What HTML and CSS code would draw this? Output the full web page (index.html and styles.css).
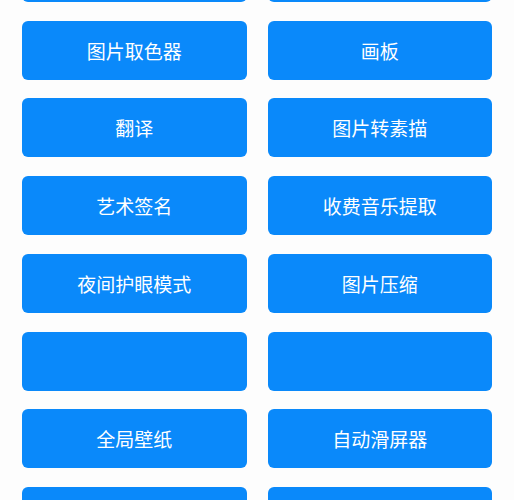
FILE: index.html
```html
<!DOCTYPE html>
<html lang="zh-CN">
<head>
    <meta charset="UTF-8">
    <meta name="viewport" content="width=device-width, initial-scale=1.0">
    <link rel="stylesheet" href="styles.css">
    <title>工具箱</title>
</head>
<body>
    <div class="tools">
        <button class="tool"></button>
        <button class="tool"></button>
        <button class="tool">图片取色器</button>
        <button class="tool">画板</button>
        <button class="tool">翻译</button>
        <button class="tool">图片转素描</button>
        <button class="tool">艺术签名</button>
        <button class="tool">收费音乐提取</button>
        <button class="tool">夜间护眼模式</button>
        <button class="tool">图片压缩</button>
        <button class="tool"></button>
        <button class="tool"></button>
        <button class="tool">全局壁纸</button>
        <button class="tool">自动滑屏器</button>
        <button class="tool"></button>
        <button class="tool"></button>
    </div>
</body>
</html>
```

FILE: styles.css
```css
*{box-sizing: border-box; margin: 0; padding: 0;}

body{background: #fdfdfd; font-family: "Noto Sans CJK SC", "Noto Sans", sans-serif; overflow: hidden;}

.tools{display: grid; grid-template-columns: 1fr 1fr; grid-auto-rows: 59px; column-gap: 21px; row-gap: 18.75px; padding: 0 22px; margin-top: -57.25px;}
.tool{border: none; border-radius: 6px; background: #0a89fa; color: #fff; font-family: inherit; font-size: 19px; line-height: 1; cursor: pointer;}
```
